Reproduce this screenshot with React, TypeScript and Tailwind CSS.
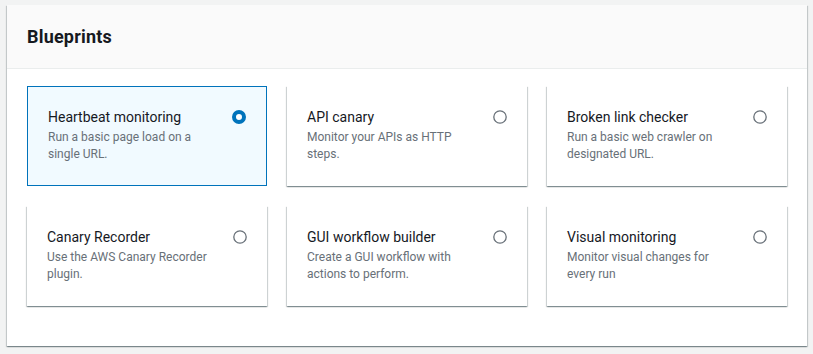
import React, { useState } from 'react';

type Blueprint = {
  id: string;
  title: string;
  description: string;
};

const BLUEPRINTS: Blueprint[] = [
  { id: 'heartbeat', title: 'Heartbeat monitoring', description: 'Run a basic page load on a single URL.' },
  { id: 'api', title: 'API canary', description: 'Monitor your APIs as HTTP steps.' },
  { id: 'broken-link', title: 'Broken link checker', description: 'Run a basic web crawler on designated URL.' },
  { id: 'recorder', title: 'Canary Recorder', description: 'Use the AWS Canary Recorder plugin.' },
  { id: 'gui', title: 'GUI workflow builder', description: 'Create a GUI workflow with actions to perform.' },
  { id: 'visual', title: 'Visual monitoring', description: 'Monitor visual changes for every run' },
];

const Radio: React.FC<{ checked: boolean }> = ({ checked }) => (
  <svg width="14" height="14" viewBox="0 0 14 14" className="shrink-0 mt-[3px]">
    {checked ? (
      <circle cx="7" cy="7" r="5" fill="#ffffff" stroke="#0073bb" strokeWidth="4" />
    ) : (
      <circle cx="7" cy="7" r="6.2" fill="#ffffff" stroke="#687078" strokeWidth="1.3" />
    )}
  </svg>
);

export default function App() {
  const [selected, setSelected] = useState('heartbeat');

  return (
    <div className="min-h-[354px] bg-[#f2f3f3] pt-[5px] pl-[7px] pr-[6px] font-['Roboto',sans-serif]">
      <div className="bg-white shadow-[0_1px_1px_0_rgba(0,28,36,0.3),1px_1px_1px_0_rgba(0,28,36,0.15),-1px_1px_1px_0_rgba(0,28,36,0.15)]">
        {/* Header */}
        <div className="bg-[#fafafa] border-b border-[#eaeded] h-[64px] px-5 flex items-center">
          <h2 className="text-[18px] font-bold text-[#16191f] leading-[22px] tracking-[0.2px]">Blueprints</h2>
        </div>

        {/* Tiles */}
        <div className="px-5 pt-[17px] pb-[40px] grid grid-cols-3 gap-5">
          {BLUEPRINTS.map((b) => {
            const isSel = b.id === selected;
            return (
              <button
                key={b.id}
                onClick={() => setSelected(b.id)}
                className={
                  isSel
                    ? 'h-[100px] text-left flex items-start justify-between gap-5 px-5 pt-[20px] border border-[#0073bb] bg-[#f1faff]'
                    : 'h-[100px] text-left flex items-start justify-between gap-5 px-5 pt-[21px] bg-white shadow-[0_1px_1px_0_rgba(0,28,36,0.3),1px_1px_1px_0_rgba(0,28,36,0.15),-1px_1px_1px_0_rgba(0,28,36,0.15)]'
                }
              >
                <div>
                  <div className="text-[14px] leading-[20px] text-[#16191f]">{b.title}</div>
                  <div className="mt-[2px] text-[12px] leading-[17px] text-[#687078]">{b.description}</div>
                </div>
                <Radio checked={isSel} />
              </button>
            );
          })}
        </div>
      </div>
    </div>
  );
}
